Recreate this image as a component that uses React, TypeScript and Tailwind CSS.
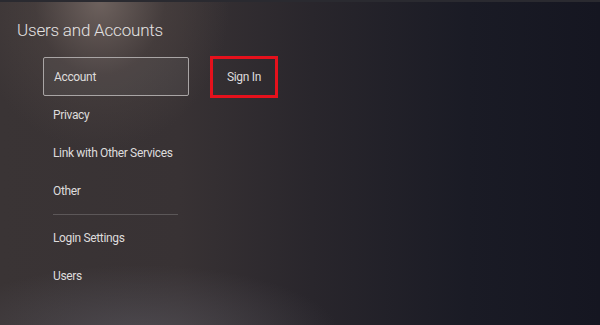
import React from 'react';

const items = ['Privacy', 'Link with Other Services', 'Other'];
const items2 = ['Login Settings', 'Users'];

export default function App() {
  return (
    <div
      className="relative w-[600px] h-[325px] overflow-hidden text-[#e4e2e2] bg-[radial-gradient(ellipse_130px_150px_at_100px_0px,#6e625e_0%,rgba(80,70,68,0.5)_50%,rgba(0,0,0,0)_100%),radial-gradient(ellipse_200px_70px_at_140px_335px,rgba(90,88,96,0.6)_0%,rgba(0,0,0,0)_100%),linear-gradient(90deg,#3a3435_0%,#383234_30%,#29262c_52%,#1a1b25_78%,#151621_100%)]"
      style={{ fontFamily: 'Roboto, "Open Sans", sans-serif' }}
    >
      <div className="border-t-2 border-[#2a2a30]" />
      {/* Title */}
      <h1 className="pl-[17px] pt-[17px] text-[17px] leading-[22px] font-light tracking-[-0.2px]">Users and Accounts</h1>

      <div className="flex mt-[16px] ml-[43px] gap-[21px]">
        {/* Menu */}
        <div className="w-[146px] flex flex-col text-[12px] tracking-[-0.35px] text-[#dedcdc]">
          <div className="h-[39px] flex items-center pl-[10px] border border-[#a9a5a5] rounded-[2px] bg-[rgba(255,255,255,0.05)]">
            Account
          </div>
          {items.map((t) => (
            <div key={t} className="h-[38px] flex items-center pl-[10px] whitespace-nowrap">
              {t}
            </div>
          ))}
          <div className="h-[9px] flex items-center pl-[10px] pr-[11px]">
            <div className="h-px w-full bg-[rgba(255,255,255,0.18)]" />
          </div>
          {items2.map((t) => (
            <div key={t} className="h-[38px] flex items-center pl-[10px]">
              {t}
            </div>
          ))}
        </div>

        {/* Sign In */}
        <div className="-mt-px h-[42px] w-[68px] border-[3px] border-[#e5111c] flex items-center justify-center text-[12px] tracking-[-0.3px] text-[#dedcdc]">
          Sign In
        </div>
      </div>
    </div>
  );
}
